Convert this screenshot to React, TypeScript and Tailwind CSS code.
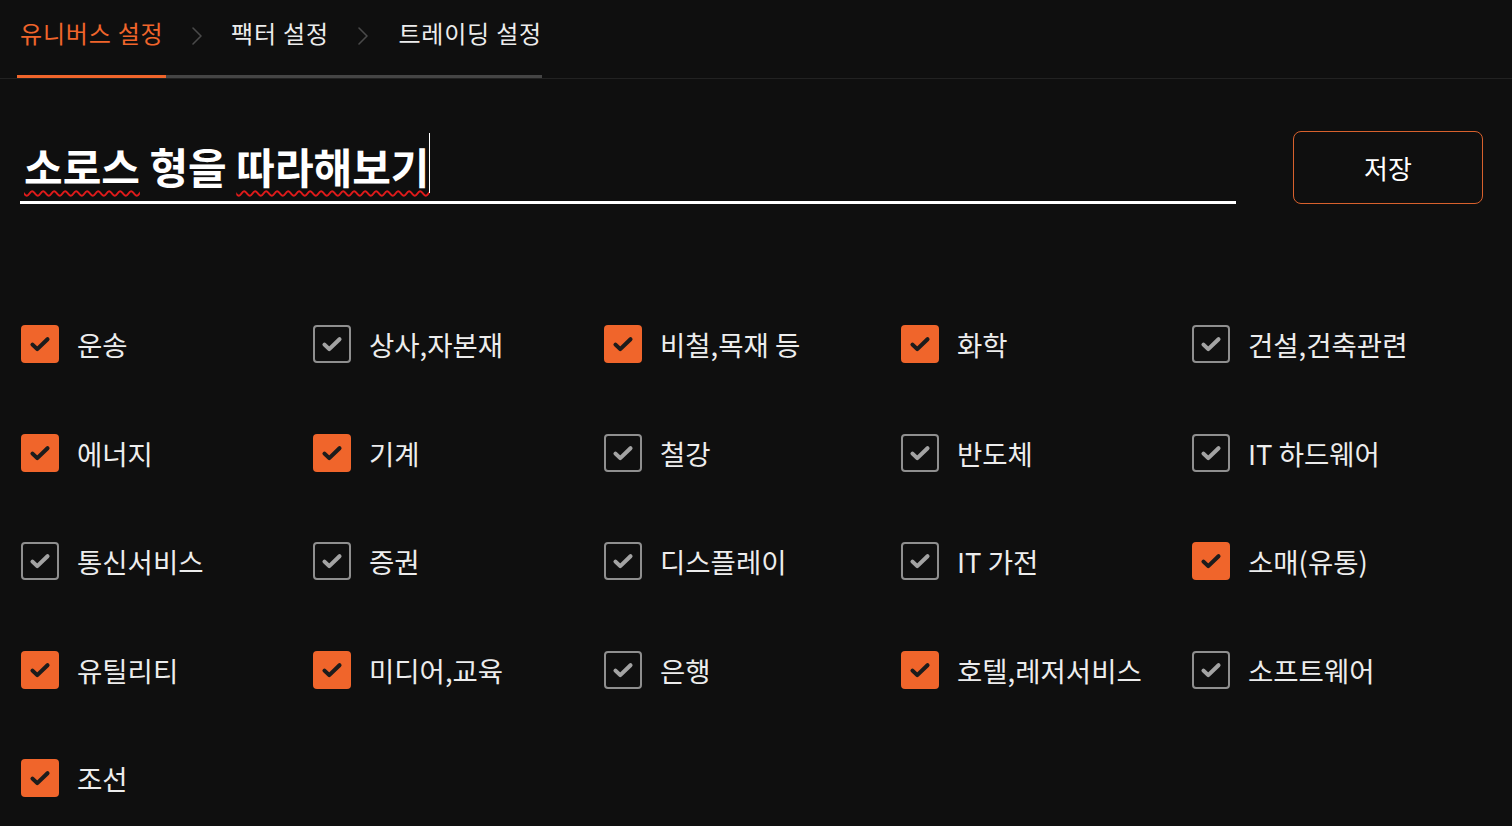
import { useState } from 'react';

const SECTORS: { name: string; on: boolean }[] = [
  { name: '운송', on: true },
  { name: '상사,자본재', on: false },
  { name: '비철,목재 등', on: true },
  { name: '화학', on: true },
  { name: '건설,건축관련', on: false },
  { name: '에너지', on: true },
  { name: '기계', on: true },
  { name: '철강', on: false },
  { name: '반도체', on: false },
  { name: 'IT 하드웨어', on: false },
  { name: '통신서비스', on: false },
  { name: '증권', on: false },
  { name: '디스플레이', on: false },
  { name: 'IT 가전', on: false },
  { name: '소매(유통)', on: true },
  { name: '유틸리티', on: true },
  { name: '미디어,교육', on: true },
  { name: '은행', on: false },
  { name: '호텔,레저서비스', on: true },
  { name: '소프트웨어', on: false },
  { name: '조선', on: true },
];

function Chevron() {
  return (
    <svg width="12" height="20" viewBox="0 0 12 20" fill="none">
      <path d="M2 2l8 8-8 8" stroke="#4a4a4a" strokeWidth="1.6" strokeLinecap="round" strokeLinejoin="round" />
    </svg>
  );
}

function CheckBox({ on }: { on: boolean }) {
  return (
    <div
      className={
        on
          ? 'w-[38px] h-[38px] rounded-[4px] bg-[#f0652b] flex items-center justify-center shrink-0'
          : 'w-[38px] h-[38px] rounded-[4px] border-2 border-[#8f8f8f] flex items-center justify-center shrink-0'
      }
    >
      <svg width="30" height="30" viewBox="0 0 24 24" fill="none">
        <path
          d="M6 12.5l3.8 3.6L18 8.2"
          stroke={on ? '#1c1c1c' : '#a3a3a3'}
          strokeWidth="3.3"
          strokeLinecap="round"
          strokeLinejoin="round"
        />
      </svg>
    </div>
  );
}

export default function App() {
  const [items, setItems] = useState(SECTORS);

  const toggle = (i: number) =>
    setItems(prev => prev.map((it, idx) => (idx === i ? { ...it, on: !it.on } : it)));

  return (
    <div
      className="w-[1512px] h-[826px] bg-[#0f0f0f] text-[#ececec] overflow-hidden"
      style={{ fontFamily: '"Noto Sans CJK KR", "Noto Sans", sans-serif' }}
    >
      {/* 상단 탭 */}
      <div className="border-b border-[#222] h-[79px] pl-[17px] flex items-end">
        <div className="px-[3px] pb-[27px] border-b-[3px] border-[#f0652b] text-[24px] leading-[30px] text-[#f0652b] tracking-[0.8px] whitespace-nowrap">
          유니버스 설정
        </div>
        <div className="w-[40px] pl-[25px] pb-[29px] border-b-[3px] border-[#454545] flex">
          <Chevron />
        </div>
        <div className="w-[147px] pb-[27px] border-b-[3px] border-[#454545] text-[24px] leading-[30px] text-center tracking-[0.8px] whitespace-nowrap">
          팩터 설정
        </div>
        <div className="w-[28px] pl-[4px] pb-[29px] border-b-[3px] border-[#454545] flex">
          <Chevron />
        </div>
        <div className="w-[161px] pl-[17px] pb-[27px] border-b-[3px] border-[#454545] text-[24px] leading-[30px] tracking-[0.8px] whitespace-nowrap">
          트레이딩 설정
        </div>
      </div>

      <div className="px-5">
        {/* 제목 + 저장 */}
        <div className="mt-[52px] flex items-stretch gap-[57px]">
          <div className="w-[1216px] h-[73px] border-b-[3px] border-white flex items-end pb-[10px] pl-[4px]">
            <span className="text-[42px] leading-[50px] font-bold text-white whitespace-nowrap">
              <span className="underline decoration-wavy decoration-[#e01a1a] decoration-[1.5px] underline-offset-[6px]">소로스</span>
              {' 형을 '}
              <span className="underline decoration-wavy decoration-[#e01a1a] decoration-[1.5px] underline-offset-[6px]">따라해보기</span>
            </span>
            <span className="w-px h-[60px] bg-white mb-[-2px]" />
          </div>
          <button className="w-[190px] h-[73px] rounded-[8px] border border-[#d8612d] text-[26px] text-white">
            저장
          </button>
        </div>

        {/* 업종 체크박스 */}
        <div className="mt-[121px] ml-px grid grid-cols-[292px_291px_297px_291px_1fr] gap-y-[70.5px]">
          {items.map((it, i) => (
            <button key={it.name} onClick={() => toggle(i)} className="flex items-center gap-[18px] text-left">
              <CheckBox on={it.on} />
              <span className="text-[27.5px] leading-[38px] text-[#ededed] whitespace-nowrap">{it.name}</span>
            </button>
          ))}
        </div>
      </div>
    </div>
  );
}
